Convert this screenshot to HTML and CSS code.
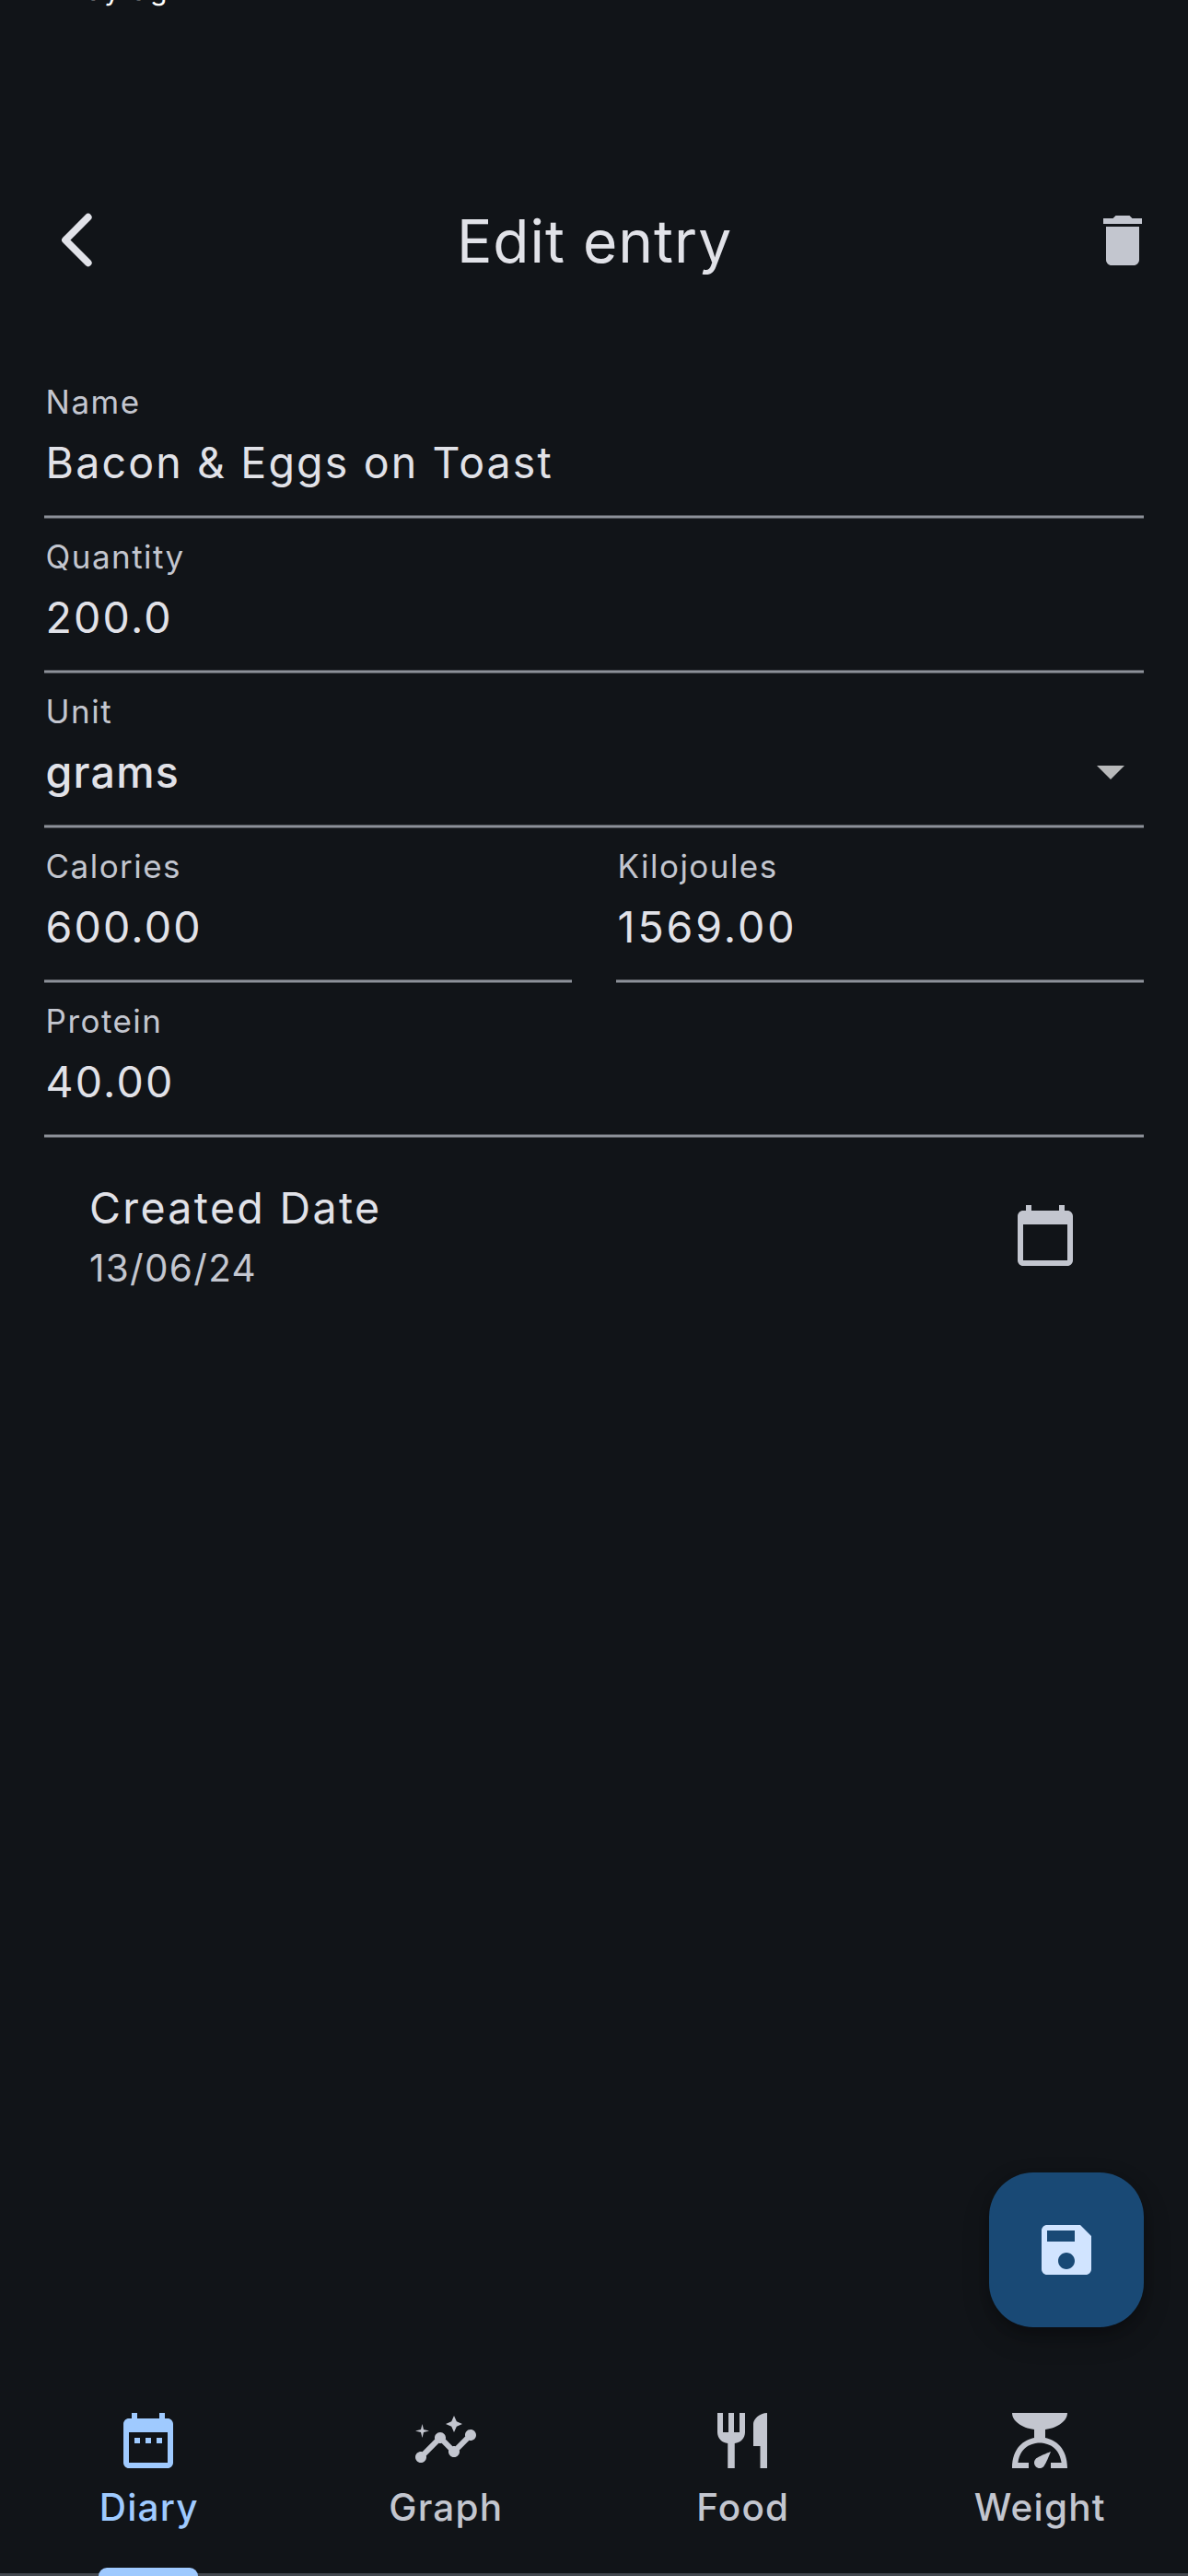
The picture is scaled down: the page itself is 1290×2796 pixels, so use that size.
FILE: index.html
```html
<!DOCTYPE html>
<html lang="en">
<head>
<meta charset="utf-8">
<title>Edit entry</title>
<link rel="stylesheet" href="styles.css">
</head>
<body>
<div class="app">
  <div class="status">60 day ago</div>
  <header class="bar">
    <svg class="back" viewBox="0 0 60 72" aria-label="Back"><path d="M35.7 10.7 11 35.6 35.7 60.3"/></svg>
    <h1 class="title">Edit entry</h1>
    <svg class="icon trash" viewBox="0 0 24 24"><path d="M6 19c0 1.1.9 2 2 2h8c1.1 0 2-.9 2-2V7H6v12zM19 4h-3.5l-1-1h-5l-1 1H5v2h14V4z"/></svg>
  </header>
  <main class="form">
    <div class="field"><div class="label">Name</div><div class="value">Bacon &amp; Eggs on Toast</div></div>
    <div class="field"><div class="label">Quantity</div><div class="value">200.0</div></div>
    <div class="field select">
      <div><div class="label">Unit</div><div class="value medium">grams</div></div>
      <svg class="icon arrow" viewBox="0 0 24 24"><path d="M7 10l5 5 5-5z"/></svg>
    </div>
    <div class="pair">
      <div class="field"><div class="label">Calories</div><div class="value">600.00</div></div>
      <div class="field"><div class="label">Kilojoules</div><div class="value number">1569.00</div></div>
    </div>
    <div class="field"><div class="label">Protein</div><div class="value">40.00</div></div>
    <div class="date-row">
      <div><div class="date-title">Created Date</div><div class="date-value">13/06/24</div></div>
      <svg class="icon" viewBox="0 0 24 24"><path d="M20 3h-1V1h-2v2H7V1H5v2H4c-1.1 0-2 .9-2 2v16c0 1.1.9 2 2 2h16c1.1 0 2-.9 2-2V5c0-1.1-.9-2-2-2zm0 18H4V8h16v13z"/></svg>
    </div>
  </main>
  <div class="fab-row">
    <div class="fab"><svg class="icon" viewBox="0 0 24 24"><path d="M17 3H5c-1.11 0-2 .9-2 2v14c0 1.1.89 2 2 2h14c1.1 0 2-.9 2-2V7l-4-4zm-5 16c-1.66 0-3-1.34-3-3s1.34-3 3-3 3 1.34 3 3-1.34 3-3 3zm3-10H5V5h10v4z"/></svg></div>
  </div>
  <nav class="tabs">
    <div class="tab active">
      <svg class="icon" viewBox="0 0 24 24"><path d="M9 11H7v2h2v-2zm4 0h-2v2h2v-2zm4 0h-2v2h2v-2zm2-7h-1V2h-2v2H8V2H6v2H5c-1.11 0-1.99.9-1.99 2L3 20c0 1.1.89 2 2 2h14c1.1 0 2-.9 2-2V6c0-1.1-.9-2-2-2zm0 16H5V9h14v11z"/></svg>
      <span class="tab-label">Diary</span>
      <i class="indicator"></i>
    </div>
    <div class="tab">
      <svg class="icon" viewBox="0 0 24 24"><path d="M21 8c-1.45 0-2.26 1.44-1.93 2.51l-3.55 3.56c-.3-.09-.74-.09-1.04 0l-2.55-2.55C12.27 10.45 11.46 9 10 9c-1.45 0-2.27 1.44-1.93 2.52l-4.56 4.55C2.44 15.74 1 16.55 1 18c0 1.1.9 2 2 2 1.45 0 2.26-1.44 1.93-2.51l4.55-4.56c.3.09.74.09 1.04 0l2.55 2.55C12.73 16.55 13.54 18 15 18c1.45 0 2.27-1.44 1.93-2.52l3.56-3.55C21.56 12.26 23 11.45 23 10c0-1.1-.9-2-2-2z"/><path d="M15 9l.94-2.07L18 6l-2.06-.93L15 3l-.92 2.07L12 6l2.08.93zM3.5 11L4 9l2-.5L4 8l-.5-2L3 8l-2 .5L3 9z"/></svg>
      <span class="tab-label">Graph</span>
    </div>
    <div class="tab">
      <svg class="icon" viewBox="0 0 24 24"><path d="M11 9H9V2H7v7H5V2H3v7c0 2.12 1.66 3.84 3.75 3.97V22h2.5v-9.03C11.34 12.84 13 11.12 13 9V2h-2v7zm5-3v8h2.5v8H21V2c-2.76 0-5 2.24-5 4z"/></svg>
      <span class="tab-label">Food</span>
    </div>
    <div class="tab">
      <svg class="icon" viewBox="0 0 24 24"><path d="M14 11V8c4.56-.58 8-3.1 8-6H2c0 2.9 3.44 5.42 8 6v3c-3.68.73-8 3.61-8 11h6v-2H4.13c.93-6.83 6.65-7.2 7.87-7.2s6.94.37 7.87 7.2H16v2h6c0-7.39-4.32-10.27-8-11z"/><path d="M12 22c-1.1 0-2-.9-2-2 0-.55.22-1.05.59-1.41C11.39 17.79 16 16 16 16s-1.79 4.61-2.59 5.41c-.36.37-.86.59-1.41.59z"/></svg>
      <span class="tab-label">Weight</span>
    </div>
  </nav>
</div>
</body>
</html>
```
FILE: styles.css
```css
* { box-sizing: border-box; margin: 0; }
body { background: #111418; color: #e1e2e8; font-family: Inter, "Liberation Sans", sans-serif; }
.app { width: 1290px; height: 2796px; overflow: hidden; display: flex; flex-direction: column; position: relative; }
.icon { width: 72px; height: 72px; flex: none; fill: #c3c6cf; display: block; }

/* Scrolled almost fully past the top edge */
.status { position: absolute; left: 20px; top: -35px; line-height: 48px; font-size: 30px; letter-spacing: 2.5px; color: #fff; white-space: nowrap; }

.bar { height: 168px; margin-top: 177px; padding: 0 35px 0 60px; display: grid; grid-template-columns: 60px 1fr 72px; align-items: center; }
.back { width: 60px; height: 72px; fill: none; stroke: #e1e2e8; stroke-width: 7.8; stroke-linecap: round; stroke-linejoin: round; }
.title { font-size: 64px; font-weight: 400; line-height: 84px; text-align: center; letter-spacing: 1px; padding: 2px 12px 0 0; }

.form { padding: 50px 48px 0; }
.field { height: 168px; padding: 19px 1.6px 0; background: linear-gradient(#51545a 0 1px, #8d9199 1px 3px, #51545a 3px) bottom / 100% 4px no-repeat; white-space: nowrap; }
.label { font-size: 35px; line-height: 44px; color: #c3c6cf; letter-spacing: 1.45px; }
.value { font-size: 46.5px; line-height: 60px; margin-top: 14px; letter-spacing: 2.15px; }
.number { letter-spacing: 2.9px; }
.medium { font-weight: 500; letter-spacing: 1.2px; }
.select { display: flex; justify-content: space-between; padding-right: 0; }
.arrow { fill: #b8b9ba; margin-top: 51px; }
.pair { display: grid; grid-template-columns: 1fr 1fr; gap: 48px; }
.date-row { display: flex; justify-content: space-between; align-items: flex-start; padding: 46px 71px 0 49px; height: 180px; white-space: nowrap; }
.date-row .icon { margin-top: 24px; }
.date-title { font-size: 46.5px; line-height: 60px; letter-spacing: 2.35px; }
.date-value { font-size: 40.5px; line-height: 54px; margin-top: 9px; color: #c3c6cf; letter-spacing: 1.3px; }

.fab-row { margin-top: auto; padding-right: 48px; display: flex; justify-content: flex-end; }
.fab { width: 168px; height: 168px; border-radius: 48px; background: #194975; display: grid; place-items: center; box-shadow: 0 12px 30px rgba(0,0,0,.2), 0 6px 12px rgba(0,0,0,.2); }
.fab .icon { fill: #d1e4ff; }

.tabs { margin-top: 51px; height: 219px; display: grid; grid-template-columns: repeat(4, 1fr); border-bottom: 3px solid #43474e; }
.tab { position: relative; padding-top: 36px; display: flex; flex-direction: column; align-items: center; color: #c3c6cf; }
.tab-label { font-size: 40.5px; font-weight: 450; line-height: 60px; margin-top: 7px; letter-spacing: 1.2px; padding-left: 1px; }
.active { color: #9fcaff; }
.active .icon { fill: #9fcaff; }
.indicator { position: absolute; bottom: -3px; left: 107px; width: 108px; height: 9px; border-radius: 9px 9px 0 0; background: #9fcaff; }
```
